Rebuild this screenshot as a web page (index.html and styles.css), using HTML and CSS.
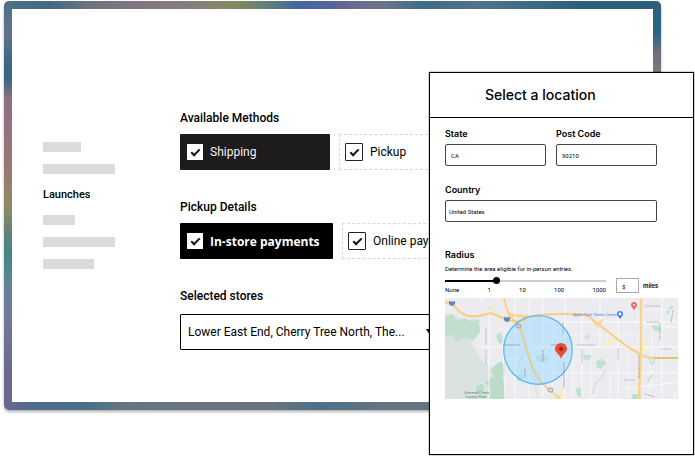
FILE: index.html
```html
<!DOCTYPE html>
<html lang="en">
<head>
  <meta charset="UTF-8">
  <meta name="viewport" content="width=device-width, initial-scale=1.0">
  <title>Select a location</title>
  <link rel="stylesheet" href="styles.css">
</head>
<body>

  <div class="stage">
    <div class="frame">
      <div class="panel">

        <nav class="sidebar">
          <span class="bar bar-sm"></span>
          <span class="bar bar-lg"></span>
          <a href="#launches">Launches</a>
          <span class="bar bar-xs"></span>
          <span class="bar bar-lg"></span>
          <span class="bar bar-md"></span>
        </nav>

        <main class="settings">
          <section class="group">
            <h2>Available Methods</h2>
            <div class="chips">
              <label class="chip chip-dark"><input type="checkbox" checked>Shipping</label>
              <label class="chip chip-dashed"><input type="checkbox" checked>Pickup</label>
            </div>
          </section>

          <section class="group">
            <h2>Pickup Details</h2>
            <div class="chips">
              <label class="chip chip-black"><input type="checkbox" checked>In-store payments</label>
              <label class="chip chip-dashed"><input type="checkbox" checked>Online payments</label>
            </div>
          </section>

          <section class="group group-stores">
            <label class="group-label" for="stores">Selected stores</label>
            <div class="select-wrap">
              <select id="stores">
                <option>Lower East End, Cherry Tree North, The...</option>
              </select>
            </div>
          </section>
        </main>

      </div>
    </div>

    <div class="dialog" role="dialog" aria-labelledby="dialogTitle">
      <h1 id="dialogTitle">Select a location</h1>
      <form class="dialog-body">
        <div class="fields">
          <div class="field">
            <label for="state">State</label>
            <input type="text" id="state" value="CA">
          </div>
          <div class="field">
            <label for="postCode">Post Code</label>
            <input type="text" id="postCode" value="90210">
          </div>
          <div class="field field-wide">
            <label for="country">Country</label>
            <input type="text" id="country" value="United States">
          </div>
        </div>

        <div class="radius">
          <label for="radius">Radius</label>
          <p>Determine the area eligible for in-person entries.</p>
          <div class="radius-row">
            <div class="slider">
              <input type="range" id="radius" min="0" max="100" value="31">
              <div class="ticks">
                <span>None</span><span>1</span><span>10</span><span>100</span><span>1000</span>
              </div>
            </div>
            <div class="miles">
              <input type="text" id="miles" value="$">
              <label for="miles">miles</label>
            </div>
          </div>
        </div>

        <svg class="map" viewBox="0 0 233 101" role="img" aria-label="Map">
          <rect width="233" height="101" fill="#ebebf0"/>

          <!-- parks -->
          <path d="M0 20 L6 16 15 20 24 22 30 20 34 28 33 38 26 45 32 54 38 64 48 70 60 66 60 101 0 101z" fill="#dbe3e2"/>
          <path d="M0 18 L7 16 12 23 20 20 27 24 34 21 35 34 28 42 20 39 12 43 6 36 0 40z" fill="#c2dfce"/>
          <path d="M49 68 L56 63 60 70 58 80 50 79 46 73z M40 84 L50 78 57 80 60 88 60 101 44 101 46 92z M31 88 L38 86 39 94 31 96z" fill="#bbdcc8"/>
          <path d="M51 37 L56 34 58 44 54 46z M91 58 L100 57 104 62 98 65 91 63z M72 77 L78 76 77 84 71 82z M138 57 h9 l-2 6 -6 -1z M151 63 l7 -3 3 5 -5 6 -4 -1z M207 27 l8 0 1 7 -7 -2z M188 96 h8 v5 h-10z M131 91 l5 -2 0 6 2 6 -6 -4z M203 60 l7 -1 0 6 -4 3z" fill="#c0e1cd"/>
          <path d="M221 14 l5 -7 2 2 -5 8z M138 38 l5 -3 3 3 -4 4z" fill="#c9e2d6"/>
          <path d="M160 43 l6 -3 5 2 -2 5 -8 1z M114 93 l6 2 1 6 -5 0z M196 44 l6 0 2 8 -6 2z" fill="#f9efcb"/>

          <!-- side streets -->
          <g fill="none" stroke="#fff">
            <path d="M35 0 L44 12 45 19 M44 19 V101 M0 12 L10 8 M35 49 H233 M58 45 L60 101 M70 0 V101 M98 0 V101 M97 24 H233 M120 0 V101 M137 10 V101 M173 18 V101 M155 0 V50 M217 0 V101 M190 24 L233 30 M97 75 H233 M178 91 L233 84 M165 75 V101 M230 101 V92" stroke-width="0.8"/>
            <path d="M60 61 H97 M84 0 V101 M108 24 V95 M128 49 V101 M146 49 V101 M183 49 V101 M207 30 V91 M120 37 H197 M120 62 H197 M198 62 H233 M198 12 H233 M205 49 V101" stroke-width="0.5"/>
            <path d="M82 52 L74 65 78 88 M74 56 L88 76 93 101" stroke="#dcdde5" stroke-width="1.2"/>
            <path d="M161 72 L156 81 152 83 147 96" stroke="#ccd6ee"/>
          </g>

          <!-- radius -->
          <circle cx="93" cy="52" r="34.3" fill="#9fdcff" fill-opacity="0.5"/>

          <!-- highways -->
          <g fill="none" stroke="#f9d58c">
            <path d="M0 4 Q9 6 14 13 Q21 20 34 18 L46 15 58 20 Q74 27 82 20 Q91 16 120 16 H132 Q143 16 149 23 L183 49 195 56 Q201 60 210 60 H233" stroke-width="2.2"/>
            <path d="M59 0 L62 12 67 20 75 28" stroke-width="2.2"/>
            <path d="M75 28 L82 53 Q87 72 95 83 L99 87" stroke="#d8d3a0" stroke-width="2.4"/>
            <path d="M99 87 Q106 93 115 101" stroke-width="2.2"/>
            <path d="M58 20 Q72 16 84 18 M62 12 Q68 20 82 19 M147 22 L156 28 M149 27 L158 22 M152 30 L156 24 M111 101 L116 97" stroke-width="1.6"/>
            <path d="M196 0 V52 L194 101" stroke-width="2.4"/>
          </g>
          <path d="M0 4 Q9 6 14 13 Q21 20 34 18 L46 15 58 20 Q74 27 82 20 Q91 16 120 16 H132 Q143 16 149 23 L183 49 195 56" fill="none" stroke="#efbd68" stroke-width="0.5"/>
          <circle cx="44" cy="10" r="2" fill="#fae4ad"/>
          <circle cx="93" cy="52" r="34.3" fill="none" stroke="#55b7f5" stroke-width="1.2"/>

          <!-- street names -->
          <g fill="none" stroke="#8c8f98" stroke-dasharray="2 0.6" opacity="0.55">
            <path d="M41 31 V47 M41 52 V67 M132 47 H151 M137 51 V65 M173 50 V63 M200 8 H215 M201 24 H214 M215 25 V42 M216 51 H226 M179 82 H190 M200 96 L210 99 M228 12 L226 25 M203 83 L208 76 M118 24 V37"/>
            <path d="M194 57 V80 M209 60 H233" stroke="#96763a"/>
            <path d="M58 47 H75 M98 52 V64 M80 71 V80 M106 47 H121 M119 64 V90" stroke="#596d7c"/>
          </g>

          <!-- road shields -->
          <g fill="#6285c6">
            <path d="M4 3 q3 1 6 0 q1 4 -3 5 q-4 -1 -3 -5z"/>
            <path d="M59 19 q3 1 6 0 q1 4 -3 5 q-4 -1 -3 -5z"/>
          </g>
          <rect x="71" y="26" width="5" height="4" rx="2" fill="#c9d3cd" stroke="#89918f" stroke-width="0.7"/>
          <rect x="103" y="90" width="5" height="4" rx="2" fill="#d9dad6" stroke="#89918f" stroke-width="0.7"/>

          <!-- pins -->
          <path d="M116 61 C115 56 110 55 110 51 a6 6 0 0 1 12 0 C122 55 117 56 116 61z" fill="#e94b35"/>
          <circle cx="116" cy="51" r="2" fill="#942116"/>
          <path d="M189 12 C188 10 186 9 186 7 a3 3 0 0 1 6 0 C192 9 190 10 189 12z" fill="#ee6b5b"/>
          <circle cx="189" cy="7" r="1" fill="#fff"/>
          <path d="M175 21 C174 19 172 18 172 16 a3 3 0 0 1 6 0 C178 18 176 19 175 21z" fill="#3f7fe8"/>
          <circle cx="175" cy="16" r="1.4" fill="#fff"/>

          <text class="map-place" x="128" y="18">Apple Park Visitor Center</text>
          <text class="map-park" x="19" y="96">Stevens Creek</text>
          <text class="map-park" x="20" y="100">County Park</text>
        </svg>
      </form>
    </div>
  </div>

</body>
</html>
```
FILE: styles.css
```css
* {
  box-sizing: border-box;
}
body {
  margin: 0;
  background: #fff;
  color: #000;
  font-family: Roboto, "Liberation Sans", sans-serif;
}
h1, h2, p {
  margin: 0;
}
input, select {
  margin: 0;
  font-family: inherit;
  color: inherit;
}

.stage {
  position: relative;
  min-height: 100vh;
  padding: 1px 34px 45px 4px;
}

/* coloured frame, one gradient strip per side */
.frame {
  padding: 8px;
  border-radius: 5px;
  background:
    linear-gradient(to right, #4b7188 0%, #46697f 7%, #6d7480 13%, #7f7581 20%, #857f7b 29%, #87895f 35%, #5f8078 40%, #4565a0 45%, #59639a 50%, #6e6c8e 54%, #69748a 58%, #3e6c86 64%, #52748a 72%, #3f6c86 79%, #2c5f7c 88%, #2c5f7c 100%) top / 100% 8px no-repeat,
    linear-gradient(to right, #6b6791 0%, #526b8b 4%, #49708a 12%, #687481 19%, #6b7280 40%, #4f708a 48%, #637383 58%, #687485 100%) bottom / 100% 8px no-repeat,
    linear-gradient(to bottom, #4b7188 0%, #65738a 8%, #3b6787 15%, #3a6685 19%, #8d707f 24%, #94717f 31%, #977970 41%, #8f8b66 50%, #60807a 57%, #468783 62%, #648299 70%, #727595 80%, #6b6791 90%, #6b6791 100%) left / 8px 100% no-repeat,
    linear-gradient(to bottom, #2c5f7c 0%, #2d6486 8%, #736f7c 13%, #7d7b84 20%, #687485 100%) right / 8px 100% no-repeat;
  box-shadow: 0 2px 3px rgba(0, 0, 0, 0.3);
}
.panel {
  display: flex;
  background: #fff;
  border-radius: 3px;
}

.sidebar {
  display: flex;
  flex-direction: column;
  flex: 0 0 168px;
  gap: 12px;
  padding: 133px 0 0 31px;
}
.sidebar a {
  color: inherit;
  font-size: 11px;
  font-weight: 500;
  line-height: 17px;
  text-decoration: none;
}
.bar {
  height: 10px;
  background: #dcdadd;
}
.bar-xs { width: 32px; }
.bar-sm { width: 38px; }
.bar-md { width: 51px; }
.bar-lg { width: 72px; }

.settings {
  display: flex;
  flex-direction: column;
  flex: 1;
  gap: 29px;
  padding: 101px 0 52px;
}
.group {
  display: flex;
  flex-direction: column;
  gap: 8px;
}
.group-stores {
  gap: 10px;
}
.group h2, .group-label {
  font-size: 12px;
  font-weight: 500;
  line-height: 16px;
}
.chips {
  display: flex;
  gap: 9px;
}
.chip {
  display: flex;
  align-items: center;
  gap: 7px;
  width: 150px;
  height: 36px;
  padding: 0 6px;
  border: 1px solid transparent;
  border-radius: 1px;
  font-size: 12px;
  white-space: nowrap;
}
.chip-dark {
  background: #1d1b1e;
  color: #f3f2f4;
}
.chip-black {
  width: 153px;
  background: #000;
  color: #fff;
  font-family: "Open Sans", sans-serif;
  font-weight: 700;
}
.chip-dashed {
  padding: 0 5px;
  border: 1px dashed #d8d8da;
}
.chip input {
  appearance: none;
  display: flex;
  justify-content: center;
  flex: none;
  width: 16px;
  height: 16px;
  padding-top: 5px;
  background: #fff;
  color: #111;
}
.chip-dashed input {
  width: 18px;
  height: 18px;
  border: 1px solid #222;
  border-radius: 1px;
}
.chip input:checked::after {
  content: "";
  width: 7px;
  height: 3px;
  border: solid currentColor;
  border-width: 0 0 2px 2px;
  transform: rotate(-45deg);
}

.select-wrap {
  position: relative;
  width: 260px;
}
.select-wrap::after {
  content: "";
  position: absolute;
  top: 15px;
  right: 6px;
  border: 4px solid transparent;
  border-top: 6px solid #000;
}
.select-wrap select {
  display: block;
  appearance: none;
  width: 100%;
  height: 36px;
  padding: 0 7px;
  border: 1px solid #000;
  border-radius: 1px;
  background: #fff;
  font-size: 12px;
}

.dialog {
  position: absolute;
  top: 72px;
  right: 1px;
  width: 265px;
  background: #fff;
  border: 1px solid #000;
  box-shadow: 0 0 1px #000;
}
.dialog h1 {
  padding-left: 55px;
  border-bottom: 1px solid #000;
  font-family: Inter, sans-serif;
  font-size: 14px;
  font-weight: 500;
  line-height: 44px;
}
.dialog-body {
  padding: 10px 15px 55px;
}
.dialog label {
  font-family: Inter, sans-serif;
  font-size: 9px;
  font-weight: 600;
  line-height: 12px;
}
.dialog input[type="text"] {
  width: 100%;
  height: 22px;
  padding: 1px 5px 0;
  border: 1px solid #444;
  border-radius: 2px;
  background: #fff;
  font-size: 6px;
}
.fields {
  display: grid;
  grid-template-columns: 1fr 1fr;
  gap: 18px 10px;
  width: 212px;
}
.field {
  display: flex;
  flex-direction: column;
  gap: 4px;
}
.field-wide {
  grid-column: 1 / -1;
}
.dialog .field-wide input {
  padding-left: 3px;
}

.radius {
  margin-top: 27px;
}
.radius > label {
  display: block;
}
.radius p {
  margin-top: 4px;
  font-size: 6px;
  line-height: 8px;
}
.radius-row {
  display: flex;
  gap: 10px;
}
.slider {
  width: 161px;
  padding-top: 4px;
}
.slider input {
  appearance: none;
  display: block;
  width: 100%;
  height: 7px;
  background: linear-gradient(to right, #000 32%, #cfcdd1 32%) center / 100% 2px no-repeat;
}
.slider input::-webkit-slider-thumb {
  appearance: none;
  width: 7px;
  height: 7px;
  border-radius: 50%;
  background: #000;
}
.ticks {
  display: flex;
  justify-content: space-between;
  margin-top: 2px;
  font-size: 6px;
  line-height: 8px;
}
.miles {
  display: flex;
  align-items: center;
  gap: 4px;
  margin-top: 5px;
  height: 15px;
}
.dialog .miles input {
  width: 23px;
  height: 15px;
  border-color: #aaa;
  border-radius: 0;
}
.dialog .miles label {
  font-size: 6px;
}

.map {
  display: block;
  width: 100%;
  margin-top: 4px;
}
.map text {
  font-size: 4px;
}
.map-place {
  fill: #4f7fd6;
}
.map-park {
  fill: #4d8a68;
}
```
